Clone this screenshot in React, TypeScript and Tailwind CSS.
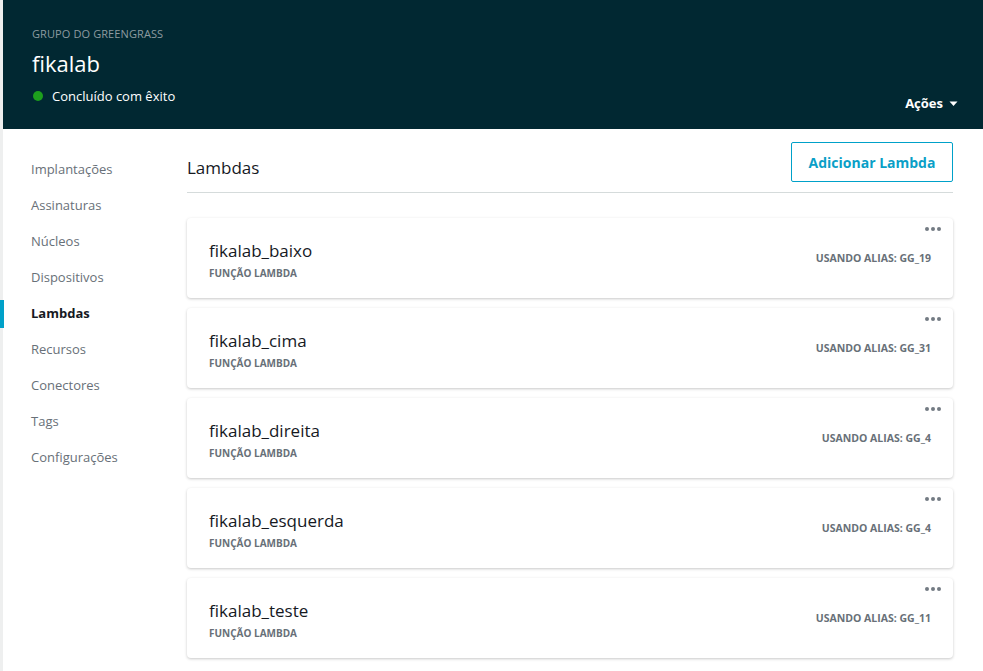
import React from "react";

const nav = ["Implantações","Assinaturas","Núcleos","Dispositivos","Lambdas","Recursos","Conectores","Tags","Configurações"];
const lambdas = [
  { name: "fikalab_baixo", alias: "GG_19" },
  { name: "fikalab_cima", alias: "GG_31" },
  { name: "fikalab_direita", alias: "GG_4" },
  { name: "fikalab_esquerda", alias: "GG_4" },
  { name: "fikalab_teste", alias: "GG_11" },
];

export default function App() {
  return (
    <div className="w-[983px] h-[671px] overflow-hidden bg-white flex" style={{ fontFamily: '"Open Sans", "Noto Sans", sans-serif' }}>
      <div className="w-[3px] shrink-0 bg-[#eeefef]" />
      <div className="flex-1 flex flex-col">
        <header className="h-[129px] bg-[#012832] flex flex-col px-[29px] pt-[27px] relative">
          <div className="text-[11px] text-[#8d9ba0] leading-[14px] tracking-[0.1px]">GRUPO DO GREENGRASS</div>
          <div className="text-[22px] text-white leading-[28px] mt-[8px] font-normal">fikalab</div>
          <div className="flex items-center mt-[10px] gap-[9px]">
            <span className="w-[10px] h-[10px] rounded-full bg-[#1d9e1d] ml-[1px]" />
            <span className="text-[13px] text-white leading-[18px]">Concluído com êxito</span>
          </div>
          <div className="absolute right-[25px] top-[94px] flex items-center gap-[6px] text-white text-[13px] font-bold">
            <span>Ações</span>
            <svg width="9" height="6" viewBox="0 0 9 6"><path d="M0.5 0.5h8L4.5 5z" fill="#fff" /></svg>
          </div>
        </header>
        <div className="flex flex-1">
          <nav className="w-[184px] shrink-0 pt-[23px]">
            {nav.map((n) => (
              <div key={n} className="h-[36px] flex items-center relative">
                {n === "Lambdas" && <span className="absolute -left-[3px] top-[4px] w-[4px] h-[28px] bg-[#00a1c9]" />}
                <span className={`pl-[28px] text-[13px] ${n === "Lambdas" ? "font-bold text-[#16191f]" : "text-[#687078]"}`}>{n}</span>
              </div>
            ))}
          </nav>
          <main className="w-[766px] pt-[13px]">
            <div className="flex items-center justify-between pb-[10px] border-b border-[#d5dbdb]">
              <h2 className="text-[17px] text-[#16191f] pt-[12px]">Lambdas</h2>
              <button className="h-[40px] w-[162px] border border-[#00a1c9] rounded-[2px] text-[#0a9fc7] text-[14px] font-bold">Adicionar Lambda</button>
            </div>
            <div className="flex flex-col gap-[10px] mt-[25px]">
              {lambdas.map((l) => (
                <div key={l.name} className="h-[80px] rounded-[4px] bg-white shadow-[0_1px_3px_rgba(0,0,0,0.22)] flex items-center justify-between px-[22px] relative">
                  <div className="flex flex-col pt-[3px]">
                    <span className="text-[17px] text-[#16191f] leading-[22px]">{l.name}</span>
                    <span className="text-[10px] font-bold text-[#687078] leading-[14px] mt-[4px]">FUNÇÃO LAMBDA</span>
                  </div>
                  <span className="text-[10.5px] font-bold text-[#687078] pt-[2px]">USANDO ALIAS: {l.alias}</span>
                  <div className="absolute right-[12px] top-[9px] flex gap-[2px]">
                    <span className="w-[4px] h-[4px] rounded-full bg-[#737b83]" />
                    <span className="w-[4px] h-[4px] rounded-full bg-[#737b83]" />
                    <span className="w-[4px] h-[4px] rounded-full bg-[#737b83]" />
                  </div>
                </div>
              ))}
            </div>
          </main>
        </div>
      </div>
    </div>
  );
}
